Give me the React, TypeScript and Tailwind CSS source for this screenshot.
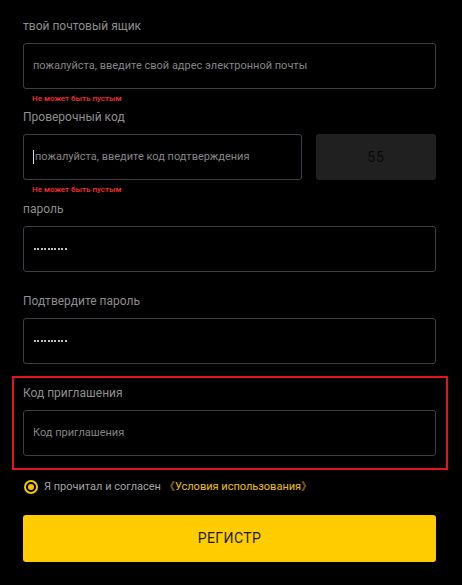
import React from "react";

const font = { fontFamily: "Roboto, 'Noto Sans', sans-serif" };

function Label({ children }: { children: React.ReactNode }) {
  return <div className="text-[12px] leading-[16px] text-[#8e8e8e]">{children}</div>;
}

function Err({ h }: { h: string }) {
  return (
    <div className={h + " pl-[9px] pt-[4px] text-[8px] leading-[12px] font-medium text-[#ff2e2e]"}>
      Не может быть пустым
    </div>
  );
}

function Box({ children, className = "" }: { children: React.ReactNode; className?: string }) {
  return (
    <div
      className={
        "h-[46px] flex items-center rounded-[3px] border border-[#3b3e45] bg-black pl-[9px] text-[11px] " +
        className
      }
    >
      {children}
    </div>
  );
}

function Dots() {
  return (
    <div className="flex gap-[1.4px] pl-[1px]">
      {Array.from({ length: 10 }).map((_, i) => (
        <span key={i} className="block h-[2px] w-[2px] rounded-full bg-white" />
      ))}
    </div>
  );
}

export default function App() {
  return (
    <div className="min-h-[585px] w-[462px] bg-black pl-[23px] pr-[26px] pt-[18px]" style={font}>
      <Label>твой почтовый ящик</Label>
      <div className="h-[9px]" />
      <Box>
        <span className="text-[#858585]">пожалуйста, введите свой адрес электронной почты</span>
      </Box>
      <Err h="h-[20px]" />

      <Label>Проверочный код</Label>
      <div className="h-[9px]" />
      <div className="flex gap-[14px]">
        <Box className="flex-1">
          <span className="mr-[1px] h-[14px] w-[1px] bg-[#dddddd]" />
          <span className="text-[#858585]">пожалуйста, введите код подтверждения</span>
        </Box>
        <div className="flex h-[46px] w-[120px] items-center justify-center rounded-[3px] bg-[#202020] text-[14px] tracking-[1px] text-[#0a0a0a]">
          55
        </div>
      </div>
      <Err h="h-[21px]" />

      <Label>пароль</Label>
      <div className="h-[9px]" />
      <Box>
        <Dots />
      </Box>
      <div className="h-[21px]" />

      <Label>Подтвердите пароль</Label>
      <div className="h-[9px]" />
      <Box>
        <Dots />
      </Box>
      <div className="h-[12px]" />

      <div className="-ml-[11px] -mr-[12px] border-2 border-[#e3141c] pb-[12px] pl-[9px] pr-[10px] pt-[7px]">
        <Label>Код приглашения</Label>
        <div className="h-[9px]" />
        <Box>
          <span className="text-[#858585]">Код приглашения</span>
        </Box>
      </div>

      <div className="mt-[10px] flex h-[14px] items-center pl-[1px]">
        <span className="flex h-[14px] w-[14px] items-center justify-center rounded-full border-2 border-[#f5c400]">
          <span className="block h-[6px] w-[6px] rounded-full bg-[#f5c400]" />
        </span>
        <span className="ml-[6px] text-[11px] text-[#a3a3a3]">Я прочитал и согласен</span>
        <span className="ml-[3px] text-[11px] text-[#f0c000]">《Условия использования》</span>
      </div>

      <button className="mt-[21px] flex h-[47px] w-full items-center justify-center rounded-[3px] bg-[#ffcc00] text-[14px] tracking-[0.4px] text-[#1c1c1c]">
        РЕГИСТР
      </button>
    </div>
  );
}
